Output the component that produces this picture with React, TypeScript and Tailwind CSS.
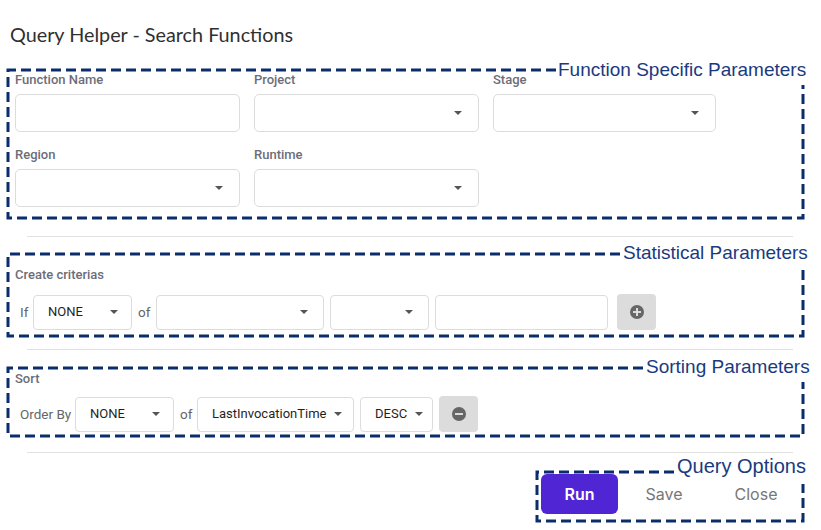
import React from "react";

const Caret = () => (
  <svg width="8" height="4" viewBox="0 0 8 4" className="shrink-0">
    <path d="M0 0 L8 0 L4 4 Z" fill="#555" />
  </svg>
);

const Field = ({ label, select, w = "w-[225px]" }: { label: string; select?: boolean; w?: string }) => (
  <div className={`flex flex-col ${w}`}>
    <div className="text-[13px] leading-4 font-medium text-[#6d6d78] h-4">{label}</div>
    <div className="mt-[6px] h-[38px] border border-[#dcdcdc] rounded-[5px] flex items-center justify-end pr-[16px] bg-white">
      {select && <Caret />}
    </div>
  </div>
);

const Sel = ({ value, w, px = "pl-[14px] pr-[13px]" }: { value?: string; w: string; px?: string }) => (
  <div className={`${w} h-[35px] border border-[#dcdcdc] rounded-[4px] flex items-center justify-between gap-[8px] ${px} bg-white`}>
    <span className="text-[13px] text-[#1f1f1f]">{value ?? ""}</span>
    <Caret />
  </div>
);

const annot = { fontFamily: "'Liberation Sans', Arial, sans-serif" };

export default function App() {
  const dash = { stroke: "#0b2d6c", strokeWidth: 3, strokeDasharray: "10 5", fill: "none" };
  return (
    <div className="relative w-[821px] h-[530px] bg-white overflow-hidden" style={{ fontFamily: "Roboto, 'Noto Sans', sans-serif" }}>
      <div className="pt-[22px] pl-[10px] text-[19.8px] leading-6 text-[#303030]" style={{ fontFamily: "Lato, 'Open Sans', sans-serif" }}>
        Query Helper - Search Functions
      </div>

      <div className="pl-[15px] pt-[26px] grid grid-cols-[225px_225px_223px] gap-x-[14px] gap-y-[15px]">
        <Field label="Function Name" />
        <Field label="Project" select />
        <Field label="Stage" select w="w-[223px]" />
        <Field label="Region" select />
        <Field label="Runtime" select />
      </div>

      <div className="ml-[27px] w-[766px] h-px bg-[#e2e2e2] mt-[29px]" />

      <div className="pl-[15px] pt-[30px] text-[13px] leading-4 font-medium text-[#6d6d78]">Create criterias</div>
      <div className="pl-[20px] mt-[11px] flex items-center h-[36px]">
        <span className="text-[13.5px] text-[#666] w-[13px]">If</span>
        <Sel value="NONE" w="w-[99px]" />
        <span className="text-[13.5px] text-[#666] ml-[6px] w-[18px]">of</span>
        <Sel w="w-[168px]" px="pr-[15px]" />
        <div className="w-[6px]" />
        <Sel w="w-[99px]" px="pr-[15px]" />
        <div className="w-[6px]" />
        <div className="w-[173px] h-[35px] border border-[#dcdcdc] rounded-[4px]" />
        <div className="w-[9px]" />
        <div className="w-[39px] h-[36px] rounded-[4px] bg-[#dcdcdc] flex items-center justify-center">
          <svg width="14" height="14" viewBox="0 0 14 14">
            <circle cx="7" cy="7" r="7" fill="#666" />
            <rect x="3" y="6" width="8" height="2" fill="#dcdcdc" />
            <rect x="6" y="3" width="2" height="8" fill="#dcdcdc" />
          </svg>
        </div>
      </div>

      <div className="ml-[27px] w-[766px] h-px bg-[#e2e2e2] mt-[19px]" />

      <div className="pl-[15px] pt-[21px] text-[13px] leading-4 font-medium text-[#6d6d78]">Sort</div>
      <div className="pl-[20px] mt-[9px] flex items-center h-[36px]">
        <span className="text-[13.5px] text-[#666] w-[55px]">Order By</span>
        <Sel value="NONE" w="w-[99px]" />
        <span className="text-[13.5px] text-[#666] ml-[6px] w-[17px]">of</span>
        <Sel value="LastInvocationTime" w="w-[157px]" />
        <div className="w-[6px]" />
        <Sel value="DESC" w="w-[73px]" />
        <div className="w-[6px]" />
        <div className="w-[39px] h-[36px] rounded-[4px] bg-[#dcdcdc] flex items-center justify-center">
          <svg width="14" height="14" viewBox="0 0 14 14">
            <circle cx="7" cy="7" r="7" fill="#666" />
            <rect x="3" y="6" width="8" height="2" fill="#dcdcdc" />
          </svg>
        </div>
      </div>

      <div className="ml-[27px] w-[766px] h-px bg-[#e2e2e2] mt-[20px]" />

      <div className="flex justify-end pr-[19px] mt-[21px] items-center" style={{ fontFamily: "Inter, sans-serif" }}>
        <button className="w-[77px] h-[40px] rounded-[6px] bg-[#5025d4] text-white text-[16px] font-semibold">Run</button>
        <button className="w-[92px] h-[40px] text-[#777] text-[16px]">Save</button>
        <button className="w-[92px] h-[40px] text-[#777] text-[16px]">Close</button>
      </div>

      {/* annotation overlay */}
      <svg className="absolute inset-0 pointer-events-none" width="821" height="530">
        <path d="M556 70 L8 70 L8 218 L803 218 L803 85" style={dash} />
        <path d="M620 254 L8 254 L8 336 L803 336 L803 270" style={dash} />
        <path d="M643 368 L8 368 L8 436 L803 436 L803 382" style={dash} />
        <path d="M674 472 L537 472 L537 521 L803 521 L803 484" style={dash} />
      </svg>
      <div className="absolute left-[558px] top-[59px] text-[19px] leading-[22px] text-[#1a3a80] bg-white" style={annot}>Function Specific Parameters</div>
      <div className="absolute left-[623px] top-[242px] text-[19px] leading-[22px] text-[#1a3a80] bg-white" style={annot}>Statistical Parameters</div>
      <div className="absolute left-[646px] top-[356px] text-[19px] leading-[22px] text-[#1a3a80] bg-white" style={annot}>Sorting Parameters</div>
      <div className="absolute left-[677px] top-[455px] text-[20px] leading-[22px] text-[#1a3a80] bg-white" style={annot}>Query Options</div>
    </div>
  );
}
